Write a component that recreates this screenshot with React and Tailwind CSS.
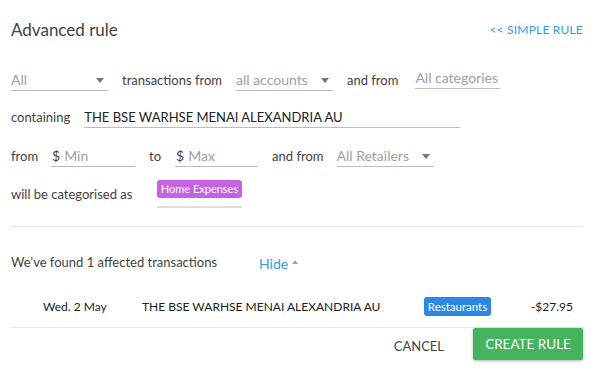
import React from 'react';

const Caret = ({ up = false, className = '' }) => (
  <svg width="8" height="5" viewBox="0 0 8 5" className={className}>
    {up ? <path d="M0 5 L4 0 L8 5 Z" fill="currentColor" /> : <path d="M0 0 L8 0 L4 5 Z" fill="currentColor" />}
  </svg>
);

const Select = ({ value, width }) => (
  <div className={`${width} h-[21px] flex items-center justify-between border-b border-[#bdbdbd] pr-[4px]`}>
    <span className="text-[14px] leading-5 text-[#9e9e9e]">{value}</span>
    <Caret className="text-[#757575]" />
  </div>
);

const Field = ({ width, children }) => (
  <div className={`${width} h-[21px] flex items-center border-b border-[#bdbdbd]`}>{children}</div>
);

const Label = ({ children, className = '' }) => (
  <span className={`text-[13px] leading-5 text-[#424242] ${className}`}>{children}</span>
);

export default function App() {
  return (
    <div className="w-[600px] h-[374px] bg-white pl-[11px] pr-[17px] font-['Lato','Open_Sans',sans-serif] text-[#424242] overflow-hidden">
      <div className="flex items-center justify-between pt-[18px] h-[42px]">
        <h2 className="text-[17px] leading-6 text-[#424242]">Advanced rule</h2>
        <a className="text-[12px] text-[#2d9be5] tracking-[0.2px]">&lt;&lt; SIMPLE RULE</a>
      </div>

      <div className="flex items-start mt-[28px]">
        <Select value="All" width="w-[97px]" />
        <Label className="ml-[14px] mr-[14px]">transactions from</Label>
        <Select value="all accounts" width="w-[97px]" />
        <Label className="ml-[14px] mr-[17px]">and from</Label>
        <div className="w-[85px] h-[19px] border-b border-[#bdbdbd]">
          <span className="text-[14px] leading-4 text-[#9e9e9e] block">All categories</span>
        </div>
      </div>

      <div className="flex items-start mt-[16px]">
        <Label className="mr-[14px]">containing</Label>
        <Field width="w-[376px]">
          <span className="text-[13px] leading-5 text-[#212121]">THE BSE WARHSE MENAI ALEXANDRIA AU</span>
        </Field>
      </div>

      <div className="flex items-start mt-[18px]">
        <Label className="mr-[13px]">from</Label>
        <Field width="w-[84px]">
          <span className="text-[14px] leading-5 text-[#424242] pl-[1px]">$</span>
          <span className="text-[14px] leading-5 text-[#9e9e9e] ml-[4px]">Min</span>
        </Field>
        <Label className="ml-[14px] mr-[14px]">to</Label>
        <Field width="w-[83px]">
          <span className="text-[14px] leading-5 text-[#424242] pl-[1px]">$</span>
          <span className="text-[14px] leading-5 text-[#9e9e9e] ml-[4px]">Max</span>
        </Field>
        <Label className="ml-[14px] mr-[13px]">and from</Label>
        <Select value="All Retailers" width="w-[97px]" />
      </div>

      <div className="flex items-center mt-[13px]">
        <Label className="w-[146px]">will be categorised as</Label>
        <div className="w-[85px] h-[28px] border-b-2 border-[#e0e0e0]">
          <span className="flex items-center justify-center w-[85px] h-[18px] rounded-[3px] bg-[#c661e4] text-white text-[11px] whitespace-nowrap">
            Home Expenses
          </span>
        </div>
      </div>

      <div className="mt-[18px] border-t border-[#e6e6e6]" />

      <div className="flex items-center mt-[26px] h-5">
        <span className="w-[248px] text-[13px] text-[#424242]">We’ve found 1 affected transactions</span>
        <span className="text-[14px] text-[#2d9be5]">Hide</span>
        <Caret up className="ml-[4px] mb-[3px] w-[6px] h-[4px] text-[#9e9e9e]" />
      </div>

      <div className="flex items-center h-[42px] mt-[13px] border-b border-[#e6e6e6] text-[12px] text-[#212121]">
        <span className="w-[131px] pl-[32px]">Wed. 2 May</span>
        <span className="w-[282px]">THE BSE WARHSE MENAI ALEXANDRIA AU</span>
        <span className="flex items-center justify-center w-[67px] h-[19px] rounded-[3px] bg-[#2b87e3] text-white text-[11.5px] whitespace-nowrap">
          Restaurants
        </span>
        <span className="flex-1 text-right pr-[10px]">-$27.95</span>
      </div>

      <div className="flex justify-end items-center h-[32px]">
        <button className="text-[13px] text-[#424242] mr-[29px] mt-[5px]">CANCEL</button>
        <button className="w-[110px] h-[32px] rounded-[2px] bg-[#45b45f] text-white text-[13.5px] shadow-[0_1px_3px_rgba(0,0,0,0.3)]">
          CREATE RULE
        </button>
      </div>
    </div>
  );
}
